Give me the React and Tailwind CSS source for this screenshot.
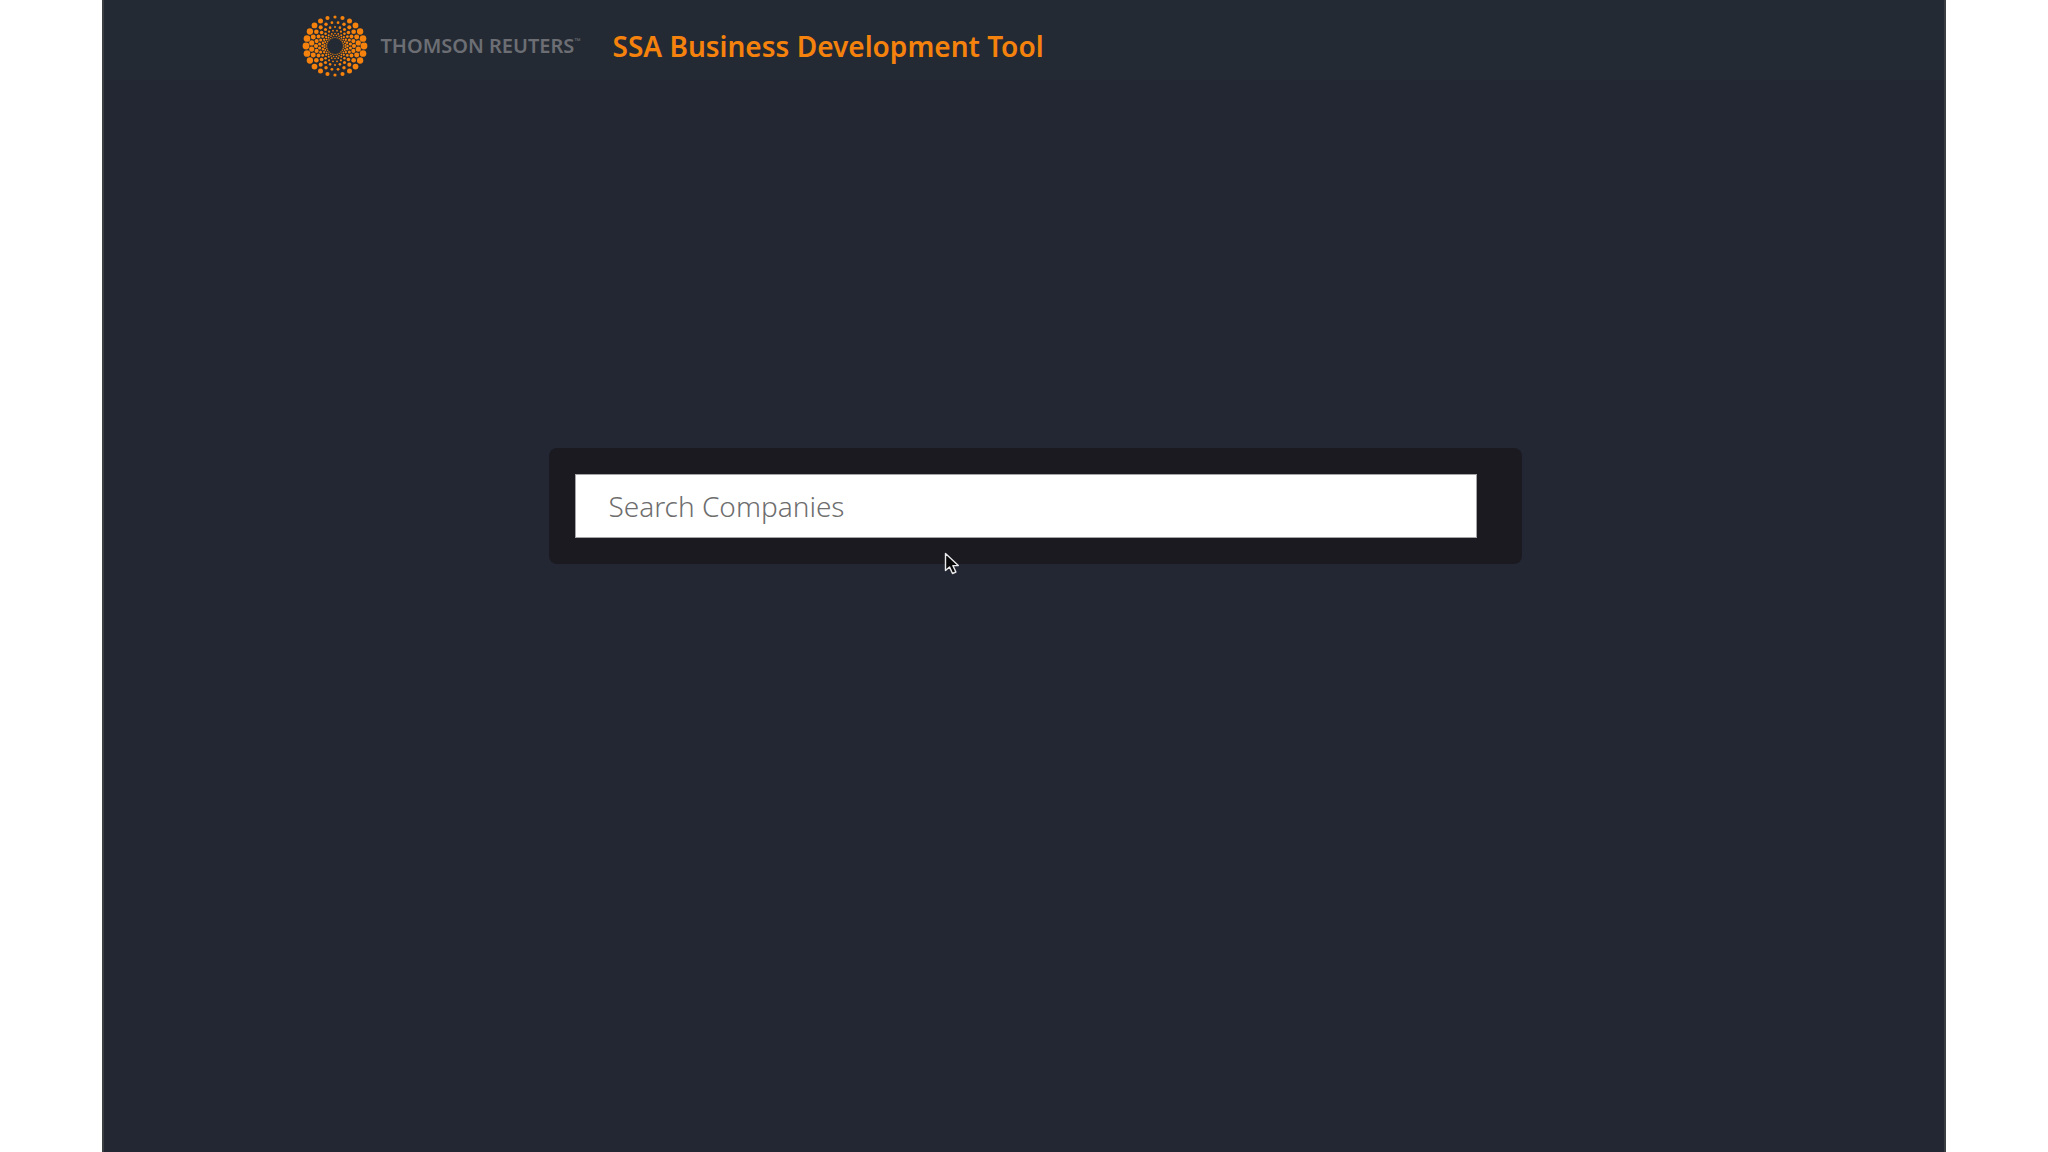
import { useState } from 'react';

const LOGO_COLOR = '#f5820d';

// Rings of the dotted mark, from the outside in
const RINGS = [
  { radius: 29, min: 1.6, max: 3.4, stagger: false },
  { radius: 23.5, min: 1.2, max: 2.6, stagger: true },
  { radius: 19, min: 1.0, max: 2.1, stagger: false },
  { radius: 15.5, min: 0.8, max: 1.6, stagger: true },
  { radius: 12.5, min: 0.8, max: 1.2, stagger: false },
  { radius: 10.5, min: 0.7, max: 1.0, stagger: true },
  { radius: 8.5, min: 0.6, max: 0.8, stagger: false }
];

const DOTS_PER_RING = 24;

const LogoMark = () => {
  const dots = RINGS.flatMap(({ radius, min, max, stagger }) =>
    Array.from({ length: DOTS_PER_RING }, (_, i) => {
      const angle = ((i + (stagger ? 0.5 : 0)) * 2 * Math.PI) / DOTS_PER_RING;
      return {
        key: `${radius}-${i}`,
        cx: 33 + radius * Math.cos(angle),
        cy: 33 + radius * Math.sin(angle),
        r: min + (max - min) * Math.abs(Math.cos(angle))
      };
    })
  );

  return (
    <svg className="size-[66px] shrink-0" viewBox="0 0 66 66" fill={LOGO_COLOR} aria-hidden="true">
      {dots.map(({ key, cx, cy, r }) => (
        <circle key={key} cx={cx} cy={cy} r={r} />
      ))}
    </svg>
  );
};

const Header = () => (
  <header className="flex h-20 items-center bg-[#232a33] pl-[198px] pt-3">
    <LogoMark />
    <span className="ml-3 flex text-[20px] font-semibold text-[#6c6e74]">
      THOMSON REUTERS
      <span className="text-[8px] leading-5">™</span>
    </span>
    <h1 className="ml-8 text-[28px] font-semibold text-[#f5820d]">SSA Business Development Tool</h1>
  </header>
);

const Pointer = () => (
  <svg width="16" height="24" viewBox="0 0 16 24" aria-hidden="true">
    <path
      d="M1.5 1.5v17l4-3.6 3 6.6 3.4-1.5-3-6.4h5.4z"
      fill="#08080a"
      stroke="#e8e8ea"
      strokeWidth="1.4"
      strokeLinejoin="round"
    />
  </svg>
);

const SearchPanel = () => {
  const [query, setQuery] = useState('');

  return (
    <form
      className="ml-[445px] mr-[422px] rounded-lg bg-[#1b1a21] py-[26px] pl-[26px] pr-[45px]"
      onSubmit={(e) => e.preventDefault()}
    >
      <input
        type="text"
        aria-label="Search Companies"
        placeholder="Search Companies"
        value={query}
        onChange={(e) => setQuery(e.target.value)}
        className="block h-16 w-full border border-[#a5a5a8] bg-white px-8 text-[28px] font-light text-gray-800 outline-none placeholder:text-[#6e6e6e]"
      />
    </form>
  );
};

export default function App() {
  return (
    <div className="min-h-screen bg-white px-[5%] font-['Noto_Sans',sans-serif]">
      <div className="min-h-screen border-x-2 border-[#3b3e42] bg-[#232733]">
        <Header />
        <main className="pt-[368px]">
          <div className="relative">
            <SearchPanel />
            <div className="absolute -bottom-3 left-[840px]">
              <Pointer />
            </div>
          </div>
        </main>
      </div>
    </div>
  );
}
